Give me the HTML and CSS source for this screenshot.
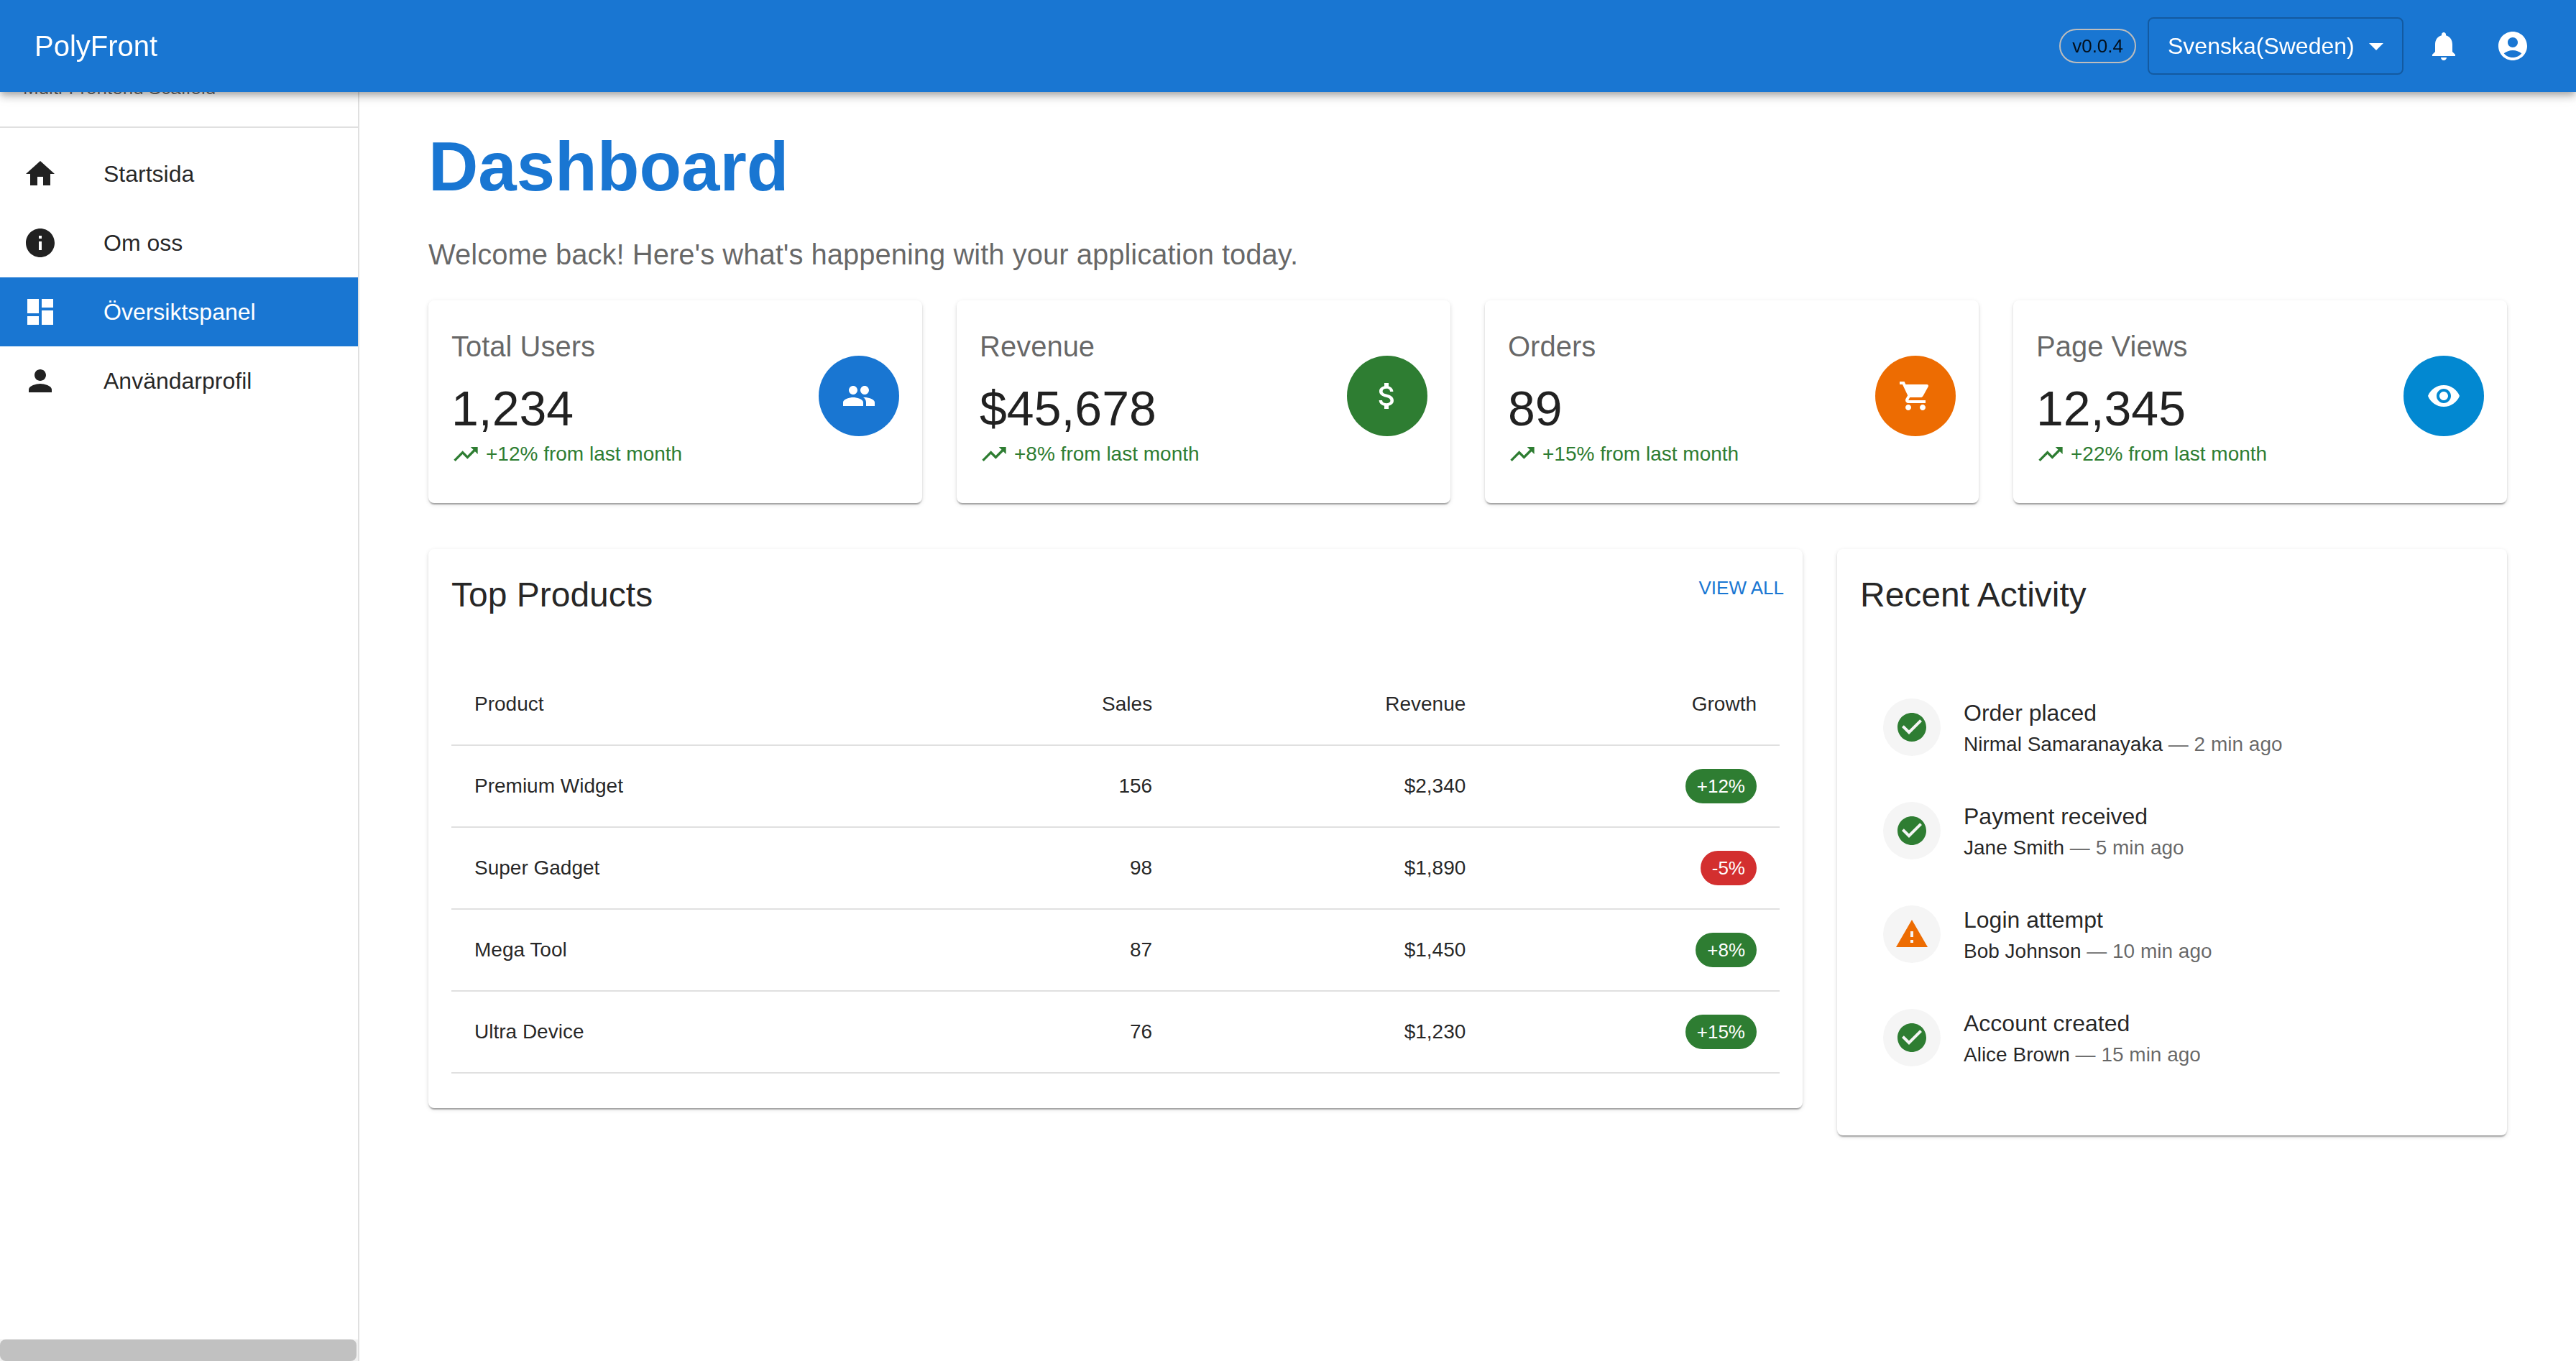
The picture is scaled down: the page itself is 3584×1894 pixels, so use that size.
FILE: index.html
```html
<!DOCTYPE html>
<html lang="sv">
<head>
<meta charset="utf-8">
<title>PolyFront – Dashboard</title>
<meta name="viewport" content="width=device-width, initial-scale=1">
<link rel="stylesheet" href="styles.css">
</head>
<body>
<svg class="sprite" aria-hidden="true">
  <symbol id="home" viewBox="0 0 24 24"><path d="M10 20v-6h4v6h5v-8h3L12 3 2 12h3v8z"/></symbol>
  <symbol id="info" viewBox="0 0 24 24"><path d="M12 2C6.48 2 2 6.48 2 12s4.48 10 10 10 10-4.48 10-10S17.52 2 12 2m1 15h-2v-6h2zm0-8h-2V7h2z"/></symbol>
  <symbol id="dashboard" viewBox="0 0 24 24"><path d="M3 13h8V3H3zm0 8h8v-6H3zm10 0h8V11h-8zm0-18v6h8V3z"/></symbol>
  <symbol id="person" viewBox="0 0 24 24"><path d="M12 12c2.21 0 4-1.79 4-4s-1.79-4-4-4-4 1.79-4 4 1.79 4 4 4m0 2c-2.67 0-8 1.34-8 4v2h16v-2c0-2.66-5.33-4-8-4"/></symbol>
  <symbol id="bell" viewBox="0 0 24 24"><path d="M12 22c1.1 0 2-.9 2-2h-4c0 1.1.89 2 2 2m6-6v-5c0-3.07-1.64-5.64-4.5-6.32V4c0-.83-.67-1.5-1.5-1.5s-1.5.67-1.5 1.5v.68C7.63 5.36 6 7.92 6 11v5l-2 2v1h16v-1z"/></symbol>
  <symbol id="account" viewBox="0 0 24 24"><path d="M12 2C6.48 2 2 6.48 2 12s4.48 10 10 10 10-4.48 10-10S17.52 2 12 2m0 4c1.93 0 3.5 1.57 3.5 3.5S13.93 13 12 13s-3.5-1.57-3.5-3.5S10.07 6 12 6m0 14c-2.03 0-4.43-.82-6.14-2.88C7.55 15.8 9.68 15 12 15s4.45.8 6.14 2.12C16.43 19.18 14.03 20 12 20"/></symbol>
  <symbol id="arrow" viewBox="0 0 24 24"><path d="m7 10 5 5 5-5z"/></symbol>
  <symbol id="trend" viewBox="0 0 24 24"><path d="m16 6 2.29 2.29-4.88 4.88-4-4L2 16.59 3.41 18l6-6 4 4 6.3-6.29L22 12V6z"/></symbol>
  <symbol id="people" viewBox="0 0 24 24"><path d="M16 11c1.66 0 2.99-1.34 2.99-3S17.66 5 16 5s-3 1.34-3 3 1.34 3 3 3m-8 0c1.66 0 2.99-1.34 2.99-3S9.66 5 8 5 5 6.34 5 8s1.34 3 3 3m0 2c-2.33 0-7 1.17-7 3.5V19h14v-2.5c0-2.33-4.67-3.5-7-3.5m8 0c-.29 0-.62.02-.97.05 1.16.84 1.97 1.97 1.97 3.45V19h6v-2.5c0-2.33-4.67-3.5-7-3.5"/></symbol>
  <symbol id="money" viewBox="0 0 24 24"><path d="M11.8 10.9c-2.27-.59-3-1.2-3-2.15 0-1.09 1.01-1.85 2.7-1.85 1.78 0 2.44.85 2.5 2.1h2.21c-.07-1.72-1.12-3.3-3.21-3.81V3h-3v2.16c-1.94.42-3.5 1.68-3.5 3.61 0 2.31 1.91 3.46 4.7 4.13 2.5.6 3 1.48 3 2.41 0 .69-.49 1.79-2.7 1.79-2.06 0-2.87-.92-2.98-2.1h-2.2c.12 2.19 1.76 3.42 3.68 3.83V21h3v-2.15c1.95-.37 3.5-1.5 3.5-3.55 0-2.84-2.43-3.81-4.7-4.4"/></symbol>
  <symbol id="cart" viewBox="0 0 24 24"><path d="M7 18c-1.1 0-1.99.9-1.99 2S5.9 22 7 22s2-.9 2-2-.9-2-2-2M1 2v2h2l3.6 7.59-1.35 2.45c-.16.28-.25.61-.25.96 0 1.1.9 2 2 2h12v-2H7.42c-.14 0-.25-.11-.25-.25l.03-.12.9-1.63h7.45c.75 0 1.41-.41 1.75-1.03l3.58-6.49c.08-.14.12-.31.12-.48 0-.55-.45-1-1-1H5.21l-.94-2zm16 16c-1.1 0-1.99.9-1.99 2s.89 2 1.99 2 2-.9 2-2-.9-2-2-2"/></symbol>
  <symbol id="eye" viewBox="0 0 24 24"><path d="M12 4.5C7 4.5 2.73 7.61 1 12c1.73 4.39 6 7.5 11 7.5s9.27-3.11 11-7.5c-1.73-4.39-6-7.5-11-7.5M12 17c-2.76 0-5-2.24-5-5s2.24-5 5-5 5 2.24 5 5-2.24 5-5 5m0-8c-1.66 0-3 1.34-3 3s1.34 3 3 3 3-1.34 3-3-1.34-3-3-3"/></symbol>
  <symbol id="check" viewBox="0 0 24 24"><path d="M12 2C6.48 2 2 6.48 2 12s4.48 10 10 10 10-4.48 10-10S17.52 2 12 2m-2 15-5-5 1.41-1.41L10 14.17l7.59-7.59L19 8z"/></symbol>
  <symbol id="warning" viewBox="0 0 24 24"><path d="M1 21h22L12 2zm12-3h-2v-2h2zm0-4h-2v-4h2z"/></symbol>
</svg>

<header class="appbar">
  <span class="brand">PolyFront</span>
  <div class="tools">
    <span class="chip version">v0.0.4</span>
    <div class="language">
      <select class="language-select" aria-label="Språk">
        <option>Svenska(Sweden)</option>
      </select>
      <svg class="icon language-arrow" aria-hidden="true"><use href="#arrow"/></svg>
    </div>
    <button class="icon-button" type="button" aria-label="Notiser"><svg class="icon"><use href="#bell"/></svg></button>
    <button class="icon-button" type="button" aria-label="Konto"><svg class="icon"><use href="#account"/></svg></button>
  </div>
</header>

<div class="layout">
  <aside class="sidebar">
    <div class="sidebar-head">Multi-Frontend Scaffold</div>
    <nav class="menu">
      <a class="menu-item" href="#"><svg class="icon"><use href="#home"/></svg>Startsida</a>
      <a class="menu-item" href="#"><svg class="icon"><use href="#info"/></svg>Om oss</a>
      <a class="menu-item selected" href="#" aria-current="page"><svg class="icon"><use href="#dashboard"/></svg>Översiktspanel</a>
      <a class="menu-item" href="#"><svg class="icon"><use href="#person"/></svg>Användarprofil</a>
    </nav>
    <div class="scroll-track"><div class="scroll-thumb"></div></div>
  </aside>

  <main class="main">
    <h1 class="title">Dashboard</h1>
    <p class="intro">Welcome back! Here's what's happening with your application today.</p>

    <div class="grid">
      <section class="card stat">
        <div>
          <h2 class="stat-label">Total Users</h2>
          <p class="stat-value">1,234</p>
          <p class="stat-trend"><svg class="icon-small"><use href="#trend"/></svg>+12% from last month</p>
        </div>
        <span class="badge blue"><svg class="icon"><use href="#people"/></svg></span>
      </section>
      <section class="card stat">
        <div>
          <h2 class="stat-label">Revenue</h2>
          <p class="stat-value">$45,678</p>
          <p class="stat-trend"><svg class="icon-small"><use href="#trend"/></svg>+8% from last month</p>
        </div>
        <span class="badge green"><svg class="icon"><use href="#money"/></svg></span>
      </section>
      <section class="card stat">
        <div>
          <h2 class="stat-label">Orders</h2>
          <p class="stat-value">89</p>
          <p class="stat-trend"><svg class="icon-small"><use href="#trend"/></svg>+15% from last month</p>
        </div>
        <span class="badge orange"><svg class="icon"><use href="#cart"/></svg></span>
      </section>
      <section class="card stat">
        <div>
          <h2 class="stat-label">Page Views</h2>
          <p class="stat-value">12,345</p>
          <p class="stat-trend"><svg class="icon-small"><use href="#trend"/></svg>+22% from last month</p>
        </div>
        <span class="badge cyan"><svg class="icon"><use href="#eye"/></svg></span>
      </section>

      <section class="card products">
        <div class="card-head">
          <h2 class="card-title">Top Products</h2>
          <button class="text-button" type="button">VIEW ALL</button>
        </div>
        <div class="card-body">
          <table class="table">
            <colgroup><col class="col-product"><col class="col-sales"><col class="col-revenue"><col class="col-growth"></colgroup>
            <thead>
              <tr><th scope="col">Product</th><th scope="col">Sales</th><th scope="col">Revenue</th><th scope="col">Growth</th></tr>
            </thead>
            <tbody>
              <tr><td>Premium Widget</td><td>156</td><td>$2,340</td><td><span class="chip green">+12%</span></td></tr>
              <tr><td>Super Gadget</td><td>98</td><td>$1,890</td><td><span class="chip red">-5%</span></td></tr>
              <tr><td>Mega Tool</td><td>87</td><td>$1,450</td><td><span class="chip green">+8%</span></td></tr>
              <tr><td>Ultra Device</td><td>76</td><td>$1,230</td><td><span class="chip green">+15%</span></td></tr>
            </tbody>
          </table>
        </div>
      </section>

      <section class="card activity">
        <div class="card-head">
          <h2 class="card-title">Recent Activity</h2>
        </div>
        <div class="card-body">
          <ul class="feed">
            <li class="feed-item">
              <span class="avatar success"><svg class="icon"><use href="#check"/></svg></span>
              <div class="feed-text">
                <p class="feed-title">Order placed</p>
                <p class="feed-meta"><span class="feed-user">Nirmal Samaranayaka</span> — 2 min ago</p>
              </div>
            </li>
            <li class="feed-item">
              <span class="avatar success"><svg class="icon"><use href="#check"/></svg></span>
              <div class="feed-text">
                <p class="feed-title">Payment received</p>
                <p class="feed-meta"><span class="feed-user">Jane Smith</span> — 5 min ago</p>
              </div>
            </li>
            <li class="feed-item">
              <span class="avatar alert"><svg class="icon"><use href="#warning"/></svg></span>
              <div class="feed-text">
                <p class="feed-title">Login attempt</p>
                <p class="feed-meta"><span class="feed-user">Bob Johnson</span> — 10 min ago</p>
              </div>
            </li>
            <li class="feed-item">
              <span class="avatar success"><svg class="icon"><use href="#check"/></svg></span>
              <div class="feed-text">
                <p class="feed-title">Account created</p>
                <p class="feed-meta"><span class="feed-user">Alice Brown</span> — 15 min ago</p>
              </div>
            </li>
          </ul>
        </div>
      </section>
    </div>
  </main>
</div>
</body>
</html>
```
FILE: styles.css
```css
:root {
  --primary: #1976d2;
  --success: #2e7d32;
  --error: #d32f2f;
  --warning: #ed6c02;
  --info: #0288d1;
  --text: rgba(0, 0, 0, 0.87);
  --muted: rgba(0, 0, 0, 0.6);
  --line: #e0e0e0;
}

* { box-sizing: border-box; }

body {
  margin: 0;
  background: #fff;
  color: var(--text);
  font-family: "Liberation Sans", Helvetica, Arial, sans-serif;
  font-size: 32px;
  line-height: 48px;
}

h1, h2, p, ul { margin: 0; padding: 0; font-weight: 400; }

.sprite { position: absolute; width: 0; height: 0; }

.icon { width: 48px; height: 48px; fill: currentColor; flex: none; }
.icon-small { width: 40px; height: 40px; fill: currentColor; flex: none; }

/* App bar */
.appbar {
  position: fixed;
  inset: 0 0 auto;
  z-index: 10;
  display: flex;
  align-items: center;
  justify-content: space-between;
  height: 128px;
  padding: 0 48px;
  background: var(--primary);
  color: #fff;
  box-shadow: 0 4px 8px -2px rgba(0, 0, 0, 0.2), 0 8px 10px rgba(0, 0, 0, 0.14), 0 2px 20px rgba(0, 0, 0, 0.12);
}

.brand { font-size: 40px; line-height: 64px; }

.tools { display: flex; align-items: center; gap: 16px; }

.chip {
  display: inline-flex;
  align-items: center;
  height: 48px;
  padding: 0 16px;
  border-radius: 24px;
  color: #fff;
  font-size: 26px;
  vertical-align: top;
}

.version { border: 2px solid #bdbdbd; color: var(--text); }

.language { position: relative; }

.language-select {
  appearance: none;
  display: block;
  height: 80px;
  padding: 0 66px 0 26px;
  border: 2px solid rgba(0, 0, 0, 0.23);
  border-radius: 8px;
  background: transparent;
  color: #fff;
  font: inherit;
}

.language-arrow { position: absolute; top: 16px; right: 14px; pointer-events: none; }

.icon-button {
  display: flex;
  padding: 16px;
  border: 0;
  border-radius: 50%;
  background: none;
  color: inherit;
}

/* Side menu */
.layout { display: flex; min-height: 100vh; }

.sidebar {
  position: sticky;
  top: 0;
  display: flex;
  flex: 0 0 500px;
  flex-direction: column;
  height: 100vh;
  border-right: 2px solid var(--line);
}

.sidebar-head {
  padding: 102px 32px 34px;
  border-bottom: 2px solid var(--line);
  color: var(--muted);
  font-size: 26px;
  line-height: 40px;
}

.menu { flex: 1; padding: 16px 0; }

.menu-item {
  display: flex;
  align-items: center;
  gap: 64px;
  height: 96px;
  padding: 0 32px;
  color: inherit;
  text-decoration: none;
}

.menu-item.selected { background: var(--primary); color: #fff; }

.scroll-track { padding-right: 2px; background: #f1f1f1; }
.scroll-thumb { height: 30px; border-radius: 8px; background: #c1c1c1; }

/* Content */
.main { flex: 1; min-width: 0; padding: 176px 96px 96px; }

.title {
  margin-bottom: 34px;
  color: var(--primary);
  font-size: 96px;
  font-weight: 700;
  line-height: 112px;
}

.intro { margin-bottom: 32px; color: var(--muted); font-size: 40px; line-height: 64px; }

.grid {
  display: grid;
  grid-template-columns: repeat(12, minmax(0, 1fr));
  gap: 64px 48px;
  align-items: start;
}

.card {
  border-radius: 8px;
  background: #fff;
  box-shadow: 0 4px 2px -2px rgba(0, 0, 0, 0.2), 0 2px 2px rgba(0, 0, 0, 0.14), 0 2px 6px rgba(0, 0, 0, 0.12);
}

.stat {
  grid-column: span 3;
  display: flex;
  align-items: center;
  justify-content: space-between;
  padding: 32px 32px 48px;
}

.stat-label { margin-bottom: 14px; color: var(--muted); font-size: 40px; line-height: 64px; }
.stat-value { margin-bottom: 4px; font-size: 68px; line-height: 80px; }

.stat-trend {
  display: flex;
  align-items: center;
  gap: 8px;
  color: var(--success);
  font-size: 28px;
  line-height: 40px;
}

.badge {
  display: flex;
  align-items: center;
  justify-content: center;
  width: 112px;
  height: 112px;
  border-radius: 50%;
  color: #fff;
}

.blue { background: var(--primary); }
.green { background: var(--success); }
.orange { background: var(--warning); }
.cyan { background: var(--info); }
.red { background: var(--error); }

.products { grid-column: span 8; }
.activity { grid-column: span 4; }

.card-head { display: flex; align-items: center; justify-content: space-between; height: 128px; padding: 0 16px 0 32px; }
.card-title { font-size: 48px; line-height: 64px; }
.card-body { padding: 32px 32px 48px; }

.text-button {
  align-self: flex-start;
  margin-top: 24px;
  padding: 8px 10px;
  border: 0;
  border-radius: 8px;
  background: none;
  color: var(--primary);
  font: inherit;
  font-size: 26px;
  line-height: 44px;
}

.table { width: 100%; border-collapse: separate; border-spacing: 0; table-layout: fixed; font-size: 28px; }
.col-product { width: 35%; }
.col-sales { width: 19.5%; }
.col-revenue { width: 23.6%; }
.col-growth { width: 21.9%; }

.table th, .table td {
  padding: 32px;
  border-bottom: 2px solid var(--line);
  font-weight: 400;
  text-align: right;
}

.table th:first-child, .table td:first-child { text-align: left; }

.feed { padding: 16px 0; list-style: none; }
.feed-item { display: flex; align-items: flex-start; gap: 32px; padding: 16px 32px; }

.avatar {
  display: flex;
  align-items: center;
  justify-content: center;
  width: 80px;
  height: 80px;
  margin-top: 16px;
  border-radius: 50%;
  background: #f5f5f5;
}

.success { color: var(--success); }
.alert { color: var(--warning); }

.feed-text { padding: 12px 0; }
.feed-meta { color: var(--muted); font-size: 28px; line-height: 40px; }
.feed-user { color: var(--text); }
```
